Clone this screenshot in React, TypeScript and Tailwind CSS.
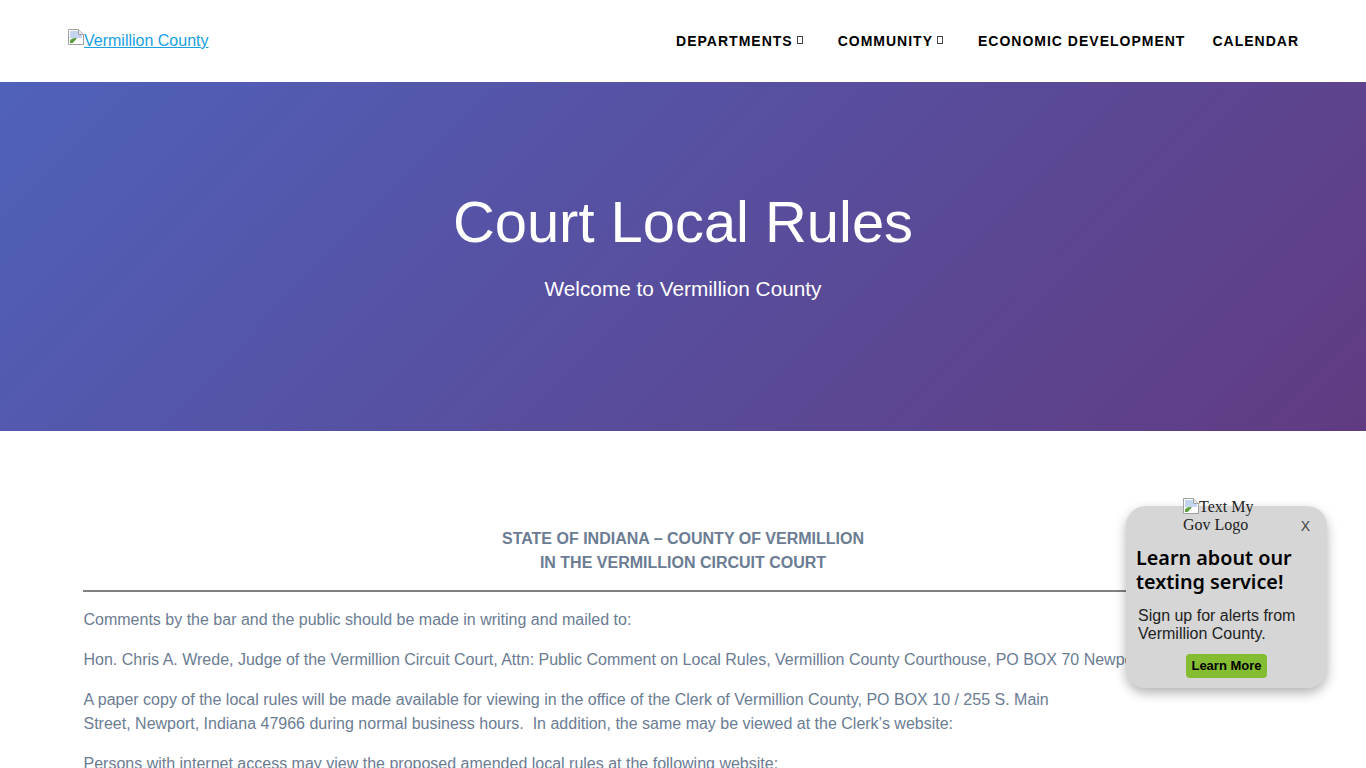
import React from "react";

const BrokenImage = () => (
  <svg width="16" height="16" viewBox="0 0 16 16" className="shrink-0">
    <path d="M0.5 0.5H10.5L15.5 5.5V15.5H0.5Z" fill="#fff" stroke="#a0a0a0" />
    <path d="M10.5 0.5V5.5H15.5" fill="#e8e8e8" stroke="#a0a0a0" />
    <path d="M2 2H10V6H14V9H2Z" fill="#c3d4f0" />
    <path d="M2 14V11.5C4 9 7 8.5 9 9.5L5 14Z" fill="#5ea03e" />
    <path d="M5 14L9 9.5L11 8L7 14Z" fill="#fff" />
  </svg>
);

const MissingGlyph = () => (
  <span className="ml-[4px] mb-[2px] inline-block h-[8px] w-[6px] border border-[#444]" />
);

const NavItem = ({ label, caret }: { label: string; caret?: boolean }) => (
  <a className="flex items-center text-[14px] font-bold tracking-[1px] text-black">
    {label}
    {caret && <MissingGlyph />}
  </a>
);

const Widget = () => (
  <div className="absolute left-[1126px] top-[506px] h-[182px] w-[201px] rounded-[20px] bg-[#d6d6d6] shadow-[0_5px_12px_rgba(0,0,0,0.3)]">
    <div className="absolute left-[57px] top-[-8px] w-[90px] font-['Liberation_Serif',serif] text-[16px] leading-[18px] text-[#222]">
      <div className="flex h-[18px]">
        <BrokenImage />
        Text My
      </div>
      <div>Gov Logo</div>
    </div>
    <div className="absolute right-[17px] top-[12px] text-[14px] leading-[16px] text-[#444]">X</div>
    <div className="px-[10px] pt-[40px] font-['Noto_Sans',sans-serif] text-[19.8px] font-semibold leading-[24px] text-black">
      Learn about our
      <br />
      texting service!
    </div>
    <div className="px-[12px] pt-[13px] text-[16px] leading-[18px] text-[#222]">
      Sign up for alerts from
      <br />
      Vermillion County.
    </div>
    <div className="flex justify-center pt-[11px]">
      <span className="rounded-[4px] bg-[#84bd32] px-[5px] py-[3px] text-[13px] font-bold leading-[18px] text-black">
        Learn More
      </span>
    </div>
  </div>
);

export default function App() {
  return (
    <div className="relative h-[768px] overflow-hidden bg-white font-['Liberation_Sans',Arial,sans-serif]">
      <header className="flex h-[82px] items-center justify-between pl-[68px] pr-[67px]">
        <a className="flex items-center text-[16px] text-[#1a9fe0] underline">
          <span className="mb-[8px]">
            <BrokenImage />
          </span>
          Vermillion County
        </a>
        <nav className="flex items-center">
          <NavItem label="DEPARTMENTS" caret />
          <span className="w-[35px]" />
          <NavItem label="COMMUNITY" caret />
          <span className="w-[35px]" />
          <NavItem label="ECONOMIC DEVELOPMENT" />
          <span className="w-[27px]" />
          <NavItem label="CALENDAR" />
        </nav>
      </header>

      <section className="flex h-[349px] flex-col items-center bg-[linear-gradient(135deg,#4f61ba,#613b82)] pt-[107px] text-white">
        <h1 className="text-[57.9px] leading-[66px]">Court Local Rules</h1>
        <p className="mt-[19px] text-[20.8px] leading-[30px]">Welcome to Vermillion County</p>
      </section>

      <main className="px-[83px] pt-[96px] text-[16px] leading-[24px] text-[#6b7c93]">
        <div className="text-center font-bold">
          STATE OF INDIANA – COUNTY OF VERMILLION
          <br />
          IN THE VERMILLION CIRCUIT COURT
        </div>
        <hr className="mt-[15px] border-t-2 border-[#808080]" />
        <p className="mt-[16px] pl-[0.5px]">Comments by the bar and the public should be made in writing and mailed to:</p>
        <p className="mt-[16px] whitespace-nowrap pl-[0.5px]">
          Hon. Chris A. Wrede, Judge of the Vermillion Circuit Court, Attn: Public Comment on Local Rules, Vermillion County Courthouse, PO BOX 70 Newport, Indiana 47966
        </p>
        <p className="mt-[16px] pl-[0.5px]">
          A paper copy of the local rules will be made available for viewing in the office of the Clerk of Vermillion County, PO BOX 10 / 255 S. Main
          <br />
          Street, Newport, Indiana 47966 during normal business hours.&nbsp; In addition, the same may be viewed at the Clerk’s website:
        </p>
        <p className="mt-[16px] pl-[0.5px]">Persons with internet access may view the proposed amended local rules at the following website:</p>
      </main>

      <Widget />
    </div>
  );
}
